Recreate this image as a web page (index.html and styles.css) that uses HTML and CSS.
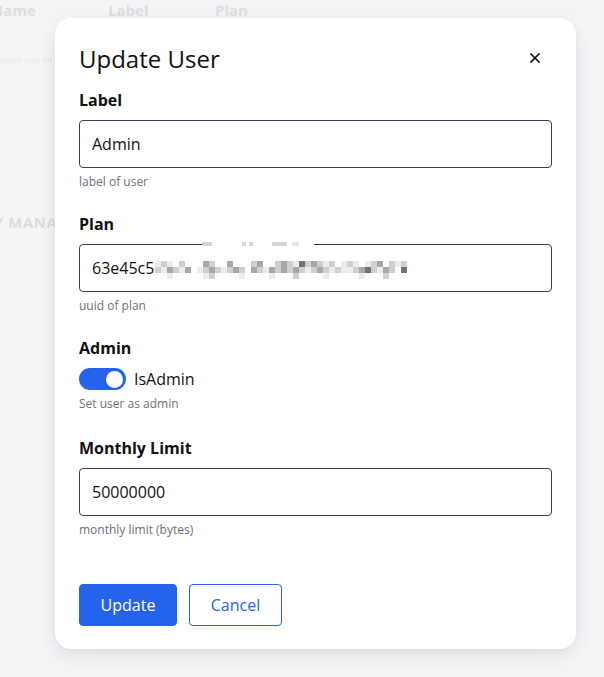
FILE: index.html
```html
<!DOCTYPE html>
<html lang="en">
<head>
<meta charset="utf-8">
<title>Update User</title>
<link rel="stylesheet" href="styles.css">
</head>
<body>
<div class="page">
  <div class="thead">
    <span class="th th-name">Name</span>
    <span class="th th-label">Label</span>
    <span class="th th-plan">Plan</span>
  </div>
  <div class="row-blur">
    <span class="blur b1"></span><span class="blur b2"></span><span class="blur b3"></span>
  </div>
  <div class="section">Y MANAGEMENT</div>
</div>

<div class="modal">
  <div class="modal-head">
    <h2 class="modal-title">Update User</h2>
    <button class="close" aria-label="Close">
      <svg width="10" height="10" viewBox="0 0 10 10"><path d="M1 1L9 9M9 1L1 9" stroke="#111" stroke-width="1.6" stroke-linecap="square"/></svg>
    </button>
  </div>

  <div class="field">
    <label class="flabel">Label</label>
    <input class="finput" type="text" value="Admin">
    <div class="fhelp">label of user</div>
  </div>

  <div class="field">
    <label class="flabel">Plan</label>
    <div class="plan-wrap">
      <input class="finput" type="text" value="63e45c5">
      <div class="pix-top">
        <span class="t m w10"></span><span class="t a w30"></span><span class="t m w4"></span><span class="t a w3"></span><span class="t m w4"></span><span class="t a w19"></span><span class="t m w15"></span><span class="t a w5"></span><span class="t l w7"></span><span class="t a w15"></span>
      </div>
      <div class="pix-grid">
        <span class="l"></span><span class="m"></span><span class="l"></span><span class="a"></span><span class="m"></span><span class="a"></span><span class="a"></span><span class="a"></span><span class="d"></span><span class="m"></span><span class="a"></span><span class="a"></span><span class="d"></span><span class="a"></span><span class="a"></span><span class="a"></span><span class="m"></span><span class="d"></span><span class="a"></span><span class="a"></span><span class="m"></span><span class="d"></span><span class="m"></span><span class="l"></span><span class="k"></span><span class="m"></span><span class="d"></span><span class="m"></span><span class="l"></span><span class="m"></span><span class="a"></span><span class="l"></span><span class="m"></span><span class="l"></span><span class="a"></span><span class="l"></span><span class="m"></span><span class="d"></span><span class="a"></span><span class="m"></span><span class="l"></span><span class="m"></span><span class="a"></span><span class="a"></span>
        <span class="m"></span><span class="l"></span><span class="d"></span><span class="m"></span><span class="l"></span><span class="d"></span><span class="a"></span><span class="l"></span><span class="m"></span><span class="d"></span><span class="m"></span><span class="l"></span><span class="m"></span><span class="d"></span><span class="m"></span><span class="a"></span><span class="d"></span><span class="m"></span><span class="l"></span><span class="d"></span><span class="m"></span><span class="d"></span><span class="m"></span><span class="d"></span><span class="m"></span><span class="l"></span><span class="m"></span><span class="d"></span><span class="m"></span><span class="l"></span><span class="m"></span><span class="l"></span><span class="l"></span><span class="m"></span><span class="d"></span><span class="k"></span><span class="m"></span><span class="l"></span><span class="d"></span><span class="m"></span><span class="a"></span><span class="k"></span><span class="a"></span><span class="a"></span>
        <span class="a"></span><span class="a"></span><span class="l"></span><span class="a"></span><span class="a"></span><span class="a"></span><span class="a"></span><span class="a"></span><span class="l"></span><span class="m"></span><span class="a"></span><span class="a"></span><span class="a"></span><span class="a"></span><span class="l"></span><span class="a"></span><span class="a"></span><span class="a"></span><span class="a"></span><span class="l"></span><span class="a"></span><span class="a"></span><span class="a"></span><span class="m"></span><span class="a"></span><span class="a"></span><span class="a"></span><span class="a"></span><span class="l"></span><span class="a"></span><span class="a"></span><span class="a"></span><span class="a"></span><span class="a"></span><span class="l"></span><span class="a"></span><span class="a"></span><span class="a"></span><span class="m"></span><span class="a"></span><span class="a"></span><span class="a"></span><span class="a"></span><span class="a"></span>
      </div>
    </div>
    <div class="fhelp">uuid of plan</div>
  </div>

  <div class="field field-admin">
    <label class="flabel">Admin</label>
    <div class="toggle-row">
      <span class="toggle"><span class="knob"></span></span>
      <span class="toggle-text">IsAdmin</span>
    </div>
    <div class="fhelp">Set user as admin</div>
  </div>

  <div class="field">
    <label class="flabel">Monthly Limit</label>
    <input class="finput" type="text" value="50000000">
    <div class="fhelp">monthly limit (bytes)</div>
  </div>

  <div class="actions">
    <button class="btn btn-primary">Update</button>
    <button class="btn btn-outline">Cancel</button>
  </div>
</div>
</body>
</html>
```

FILE: styles.css
```css
* { box-sizing: border-box; }
html, body { margin: 0; padding: 0; }
body {
  width: 604px;
  height: 677px;
  overflow: hidden;
  background: #f4f5f7;
  font-family: "Open Sans", "Noto Sans", sans-serif;
  color: #111827;
  position: relative;
}
.page {
  display: flex;
  flex-direction: column;
}
.thead {
  display: flex;
  height: 20px;
  align-items: center;
  font-weight: 700;
  font-size: 15px;
  color: #dcdee2;
  background: #f3f4f6;
}
.th-name { margin-left: -9px; width: 117px; }
.th-label { width: 107px; }
.row-blur {
  display: flex;
  gap: 3px;
  margin-top: 38px;
  height: 6px;
}
.blur { display: block; height: 5px; background: #eeeff1; }
.b1 { width: 22px; }
.b2 { width: 14px; }
.b3 { width: 10px; }
.section {
  margin-top: 148px;
  margin-left: -6px;
  font-size: 15px;
  font-weight: 700;
  letter-spacing: 0.5px;
  color: #dcdee2;
}

.modal {
  position: absolute;
  left: 55px;
  top: 18px;
  width: 521px;
  height: 631px;
  background: #fff;
  border-radius: 16px;
  box-shadow: 0 8px 20px rgba(17, 24, 39, 0.08), 0 2px 6px rgba(17, 24, 39, 0.04);
  padding: 24px 24px 23px 24px;
  display: flex;
  flex-direction: column;
}
.modal-head {
  display: flex;
  justify-content: space-between;
  align-items: center;
  height: 34px;
  margin-bottom: 12px;
}
.modal-title {
  margin: 0;
  font-size: 24px;
  font-weight: 400;
  color: #111;
  line-height: 34px;
}
.close {
  border: 0;
  background: transparent;
  padding: 0;
  width: 10px;
  height: 10px;
  margin-right: 12px;
  margin-bottom: 2px;
  display: flex;
}
.field {
  display: flex;
  flex-direction: column;
  margin-bottom: 22px;
}
.flabel {
  font-weight: 700;
  font-size: 16px;
  line-height: 24px;
  margin-bottom: 8px;
  color: #111;
}
.finput {
  height: 48px;
  width: 473px;
  border: 1px solid #374151;
  border-radius: 4px;
  padding: 0 12px;
  font-family: inherit;
  font-size: 16px;
  color: #111;
  background: #fff;
  outline: none;
}
.fhelp {
  font-size: 12px;
  line-height: 16px;
  margin-top: 6px;
  color: #6b7280;
}
.plan-wrap { position: relative; }
.pix-top {
  position: absolute;
  left: 123px;
  top: -2px;
  height: 5px;
  display: flex;
  background: #fff;
}
.t { display: block; height: 4px; }
.t.m { background: #d2d4d8; }
.t.l { background: #e4e5e8; }
.t.a { background: #fff; }
.w3 { width: 3px; } .w4 { width: 4px; } .w5 { width: 5px; } .w7 { width: 7px; }
.w10 { width: 10px; } .w15 { width: 15px; } .w19 { width: 19px; } .w30 { width: 30px; }
.pix-grid {
  position: absolute;
  left: 76px;
  top: 17px;
  display: grid;
  grid-template-columns: repeat(44, 6px);
  grid-auto-rows: 6px;
}
.pix-grid span { display: block; }
.pix-grid .a { background: #fff; }
.pix-grid .l { background: #ebecee; }
.pix-grid .m { background: #cdcfd2; }
.pix-grid .d { background: #a4a7ab; }
.pix-grid .k { background: #6e7177; }

.field-admin { margin-bottom: 24px; }
.field-admin .flabel { margin-bottom: 7px; }
.toggle-row {
  display: flex;
  align-items: center;
  gap: 8px;
  height: 24px;
}
.toggle {
  width: 47px;
  height: 22px;
  border-radius: 11px;
  background: #2563eb;
  display: flex;
  align-items: center;
  justify-content: flex-end;
  padding-right: 3px;
}
.knob {
  width: 17px;
  height: 17px;
  border-radius: 50%;
  background: #fff;
}
.toggle-text { font-size: 16px; color: #111; }
.field-admin .fhelp { margin-top: 5px; }

.actions {
  margin-top: auto;
  display: flex;
  gap: 12px;
}
.btn {
  height: 42px;
  border-radius: 4px;
  font-family: inherit;
  font-size: 16px;
  padding: 0;
  cursor: pointer;
}
.btn-primary {
  width: 98px;
  background: #2563eb;
  color: #fff;
  border: 1px solid #2563eb;
}
.btn-outline {
  width: 93px;
  background: #fff;
  color: #2563eb;
  border: 1px solid #2563eb;
}
```
